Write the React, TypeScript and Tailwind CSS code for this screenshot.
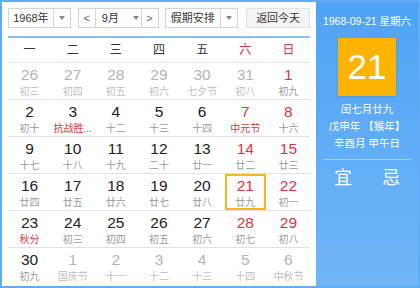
import React from 'react';

type Day = {
  n: number;
  lunar: string;
  other?: boolean;
  red?: boolean;
  fest?: boolean;
  selected?: boolean;
};

const weeks: Day[][] = [
  [
    { n: 26, lunar: '初三', other: true },
    { n: 27, lunar: '初四', other: true },
    { n: 28, lunar: '初五', other: true },
    { n: 29, lunar: '初六', other: true },
    { n: 30, lunar: '七夕节', other: true },
    { n: 31, lunar: '初八', other: true },
    { n: 1, lunar: '初九', red: true },
  ],
  [
    { n: 2, lunar: '初十' },
    { n: 3, lunar: '抗战胜...', fest: true },
    { n: 4, lunar: '十二' },
    { n: 5, lunar: '十三' },
    { n: 6, lunar: '十四' },
    { n: 7, lunar: '中元节', red: true, fest: true },
    { n: 8, lunar: '十六', red: true },
  ],
  [
    { n: 9, lunar: '十七' },
    { n: 10, lunar: '十八' },
    { n: 11, lunar: '十九' },
    { n: 12, lunar: '二十' },
    { n: 13, lunar: '廿一' },
    { n: 14, lunar: '廿二', red: true },
    { n: 15, lunar: '廿三', red: true },
  ],
  [
    { n: 16, lunar: '廿四' },
    { n: 17, lunar: '廿五' },
    { n: 18, lunar: '廿六' },
    { n: 19, lunar: '廿七' },
    { n: 20, lunar: '廿八' },
    { n: 21, lunar: '廿九', red: true, selected: true },
    { n: 22, lunar: '初一', red: true },
  ],
  [
    { n: 23, lunar: '秋分', fest: true },
    { n: 24, lunar: '初三' },
    { n: 25, lunar: '初四' },
    { n: 26, lunar: '初五' },
    { n: 27, lunar: '初六' },
    { n: 28, lunar: '初七', red: true },
    { n: 29, lunar: '初八', red: true },
  ],
  [
    { n: 30, lunar: '初九' },
    { n: 1, lunar: '国庆节', other: true },
    { n: 2, lunar: '十一', other: true },
    { n: 3, lunar: '十二', other: true },
    { n: 4, lunar: '十三', other: true },
    { n: 5, lunar: '十四', other: true },
    { n: 6, lunar: '中秋节', other: true },
  ],
];

const weekdays = ['一', '二', '三', '四', '五', '六', '日'];

function Caret() {
  return <span className="w-0 h-0 border-l-[3px] border-r-[3px] border-t-[4px] border-l-transparent border-r-transparent border-t-[#888]" />;
}

function DayCell({ d }: { d: Day }) {
  const numColor = d.other ? 'text-[#b4b4b4]' : d.red ? 'text-[#d9363e]' : 'text-[#222]';
  const lunarColor = d.other ? 'text-[#bdbdbd]' : d.fest ? 'text-[#d9363e]' : 'text-[#999]';
  return (
    <div className="h-[36px] flex justify-center">
      <div
        className={
          'w-[41px] h-[36px] flex flex-col items-center ' +
          (d.selected ? 'border-2 border-[#f5b81c]' : 'border-2 border-transparent')
        }
      >
        <span className={'text-[15.5px] leading-[18px] mt-[1px] ' + numColor}>{d.n}</span>
        <span className={'text-[10px] leading-[13px] mt-[1px] whitespace-nowrap ' + lunarColor}>{d.lunar}</span>
      </div>
    </div>
  );
}

export default function App() {
  return (
    <div
      className="w-[420px] h-[288px] border-2 border-[#62abf5] flex overflow-hidden text-[#333]"
      style={{ fontFamily: '"Liberation Sans", "Noto Sans CJK SC", sans-serif' }}
    >
      {/* left: calendar */}
      <div className="w-[314px] bg-white px-[6px] pt-[6px]">
        <div className="h-[20px] flex text-[11px] text-[#333] whitespace-nowrap">
          <div className="w-[63px] flex border border-[#d4d4d4]">
            <span className="flex-1 flex items-center justify-center">1968年</span>
            <span className="w-[17px] border-l border-[#d4d4d4] flex items-center justify-center">
              <Caret />
            </span>
          </div>
          <div className="ml-[7px] w-[81px] flex border border-[#d4d4d4]">
            <span className="w-[17px] border-r border-[#d4d4d4] flex items-center justify-center text-[#666]">&lt;</span>
            <span className="flex-1 flex items-center pl-[6px] gap-[14px]">
              <span>9月</span>
              <Caret />
            </span>
            <span className="w-[17px] border-l border-[#d4d4d4] flex items-center justify-center text-[#666]">&gt;</span>
          </div>
          <div className="ml-[6px] w-[74px] flex border border-[#d4d4d4]">
            <span className="flex-1 flex items-center justify-center">假期安排</span>
            <span className="w-[17px] border-l border-[#d4d4d4] flex items-center justify-center">
              <Caret />
            </span>
          </div>
          <div className="ml-[8px] w-[64px] flex items-center justify-center bg-[#f4f4f4] border border-[#e2e2e2]">
            返回今天
          </div>
        </div>

        <div className="mt-[8px] h-[2px] bg-[#8cc0f2]" />
        <div className="grid grid-cols-7 h-[25px] border-b border-[#e2e2e2] text-[12px]">
          {weekdays.map((w, i) => (
            <div key={w} className={'flex items-center justify-center ' + (i >= 5 ? 'text-[#d9363e]' : 'text-[#333]')}>
              {w}
            </div>
          ))}
        </div>

        {weeks.map((row, ri) => (
          <div key={ri} className={'grid grid-cols-7 ' + (ri < 5 ? 'border-b border-[#e2e2e2]' : '')}>
            {row.map((d, ci) => (
              <DayCell key={ci} d={d} />
            ))}
          </div>
        ))}
      </div>

      {/* right: detail */}
      <div className="flex-1 bg-gradient-to-b from-[#4fa3f4] to-[#70b6f8] flex flex-col items-center text-white">
        <div className="mt-[12px] text-[10.5px] leading-[14px]">1968-09-21 星期六</div>
        <div className="mt-[10px] w-[58px] h-[58px] bg-[#fdb300] flex items-center justify-center text-[35px] shadow-sm">
          21
        </div>
        <div className="mt-[5px] text-[10.5px] leading-[17px] flex flex-col items-center">
          <span>闰七月廿九</span>
          <span>戊申年 【猴年】</span>
          <span>辛酉月 甲午日</span>
        </div>
        <div className="mt-[7px] w-[87px] h-px bg-white/40" />
        <div className="mt-[6px] flex gap-[30px] text-[18px] leading-[24px]">
          <span>宜</span>
          <span>忌</span>
        </div>
      </div>
    </div>
  );
}
